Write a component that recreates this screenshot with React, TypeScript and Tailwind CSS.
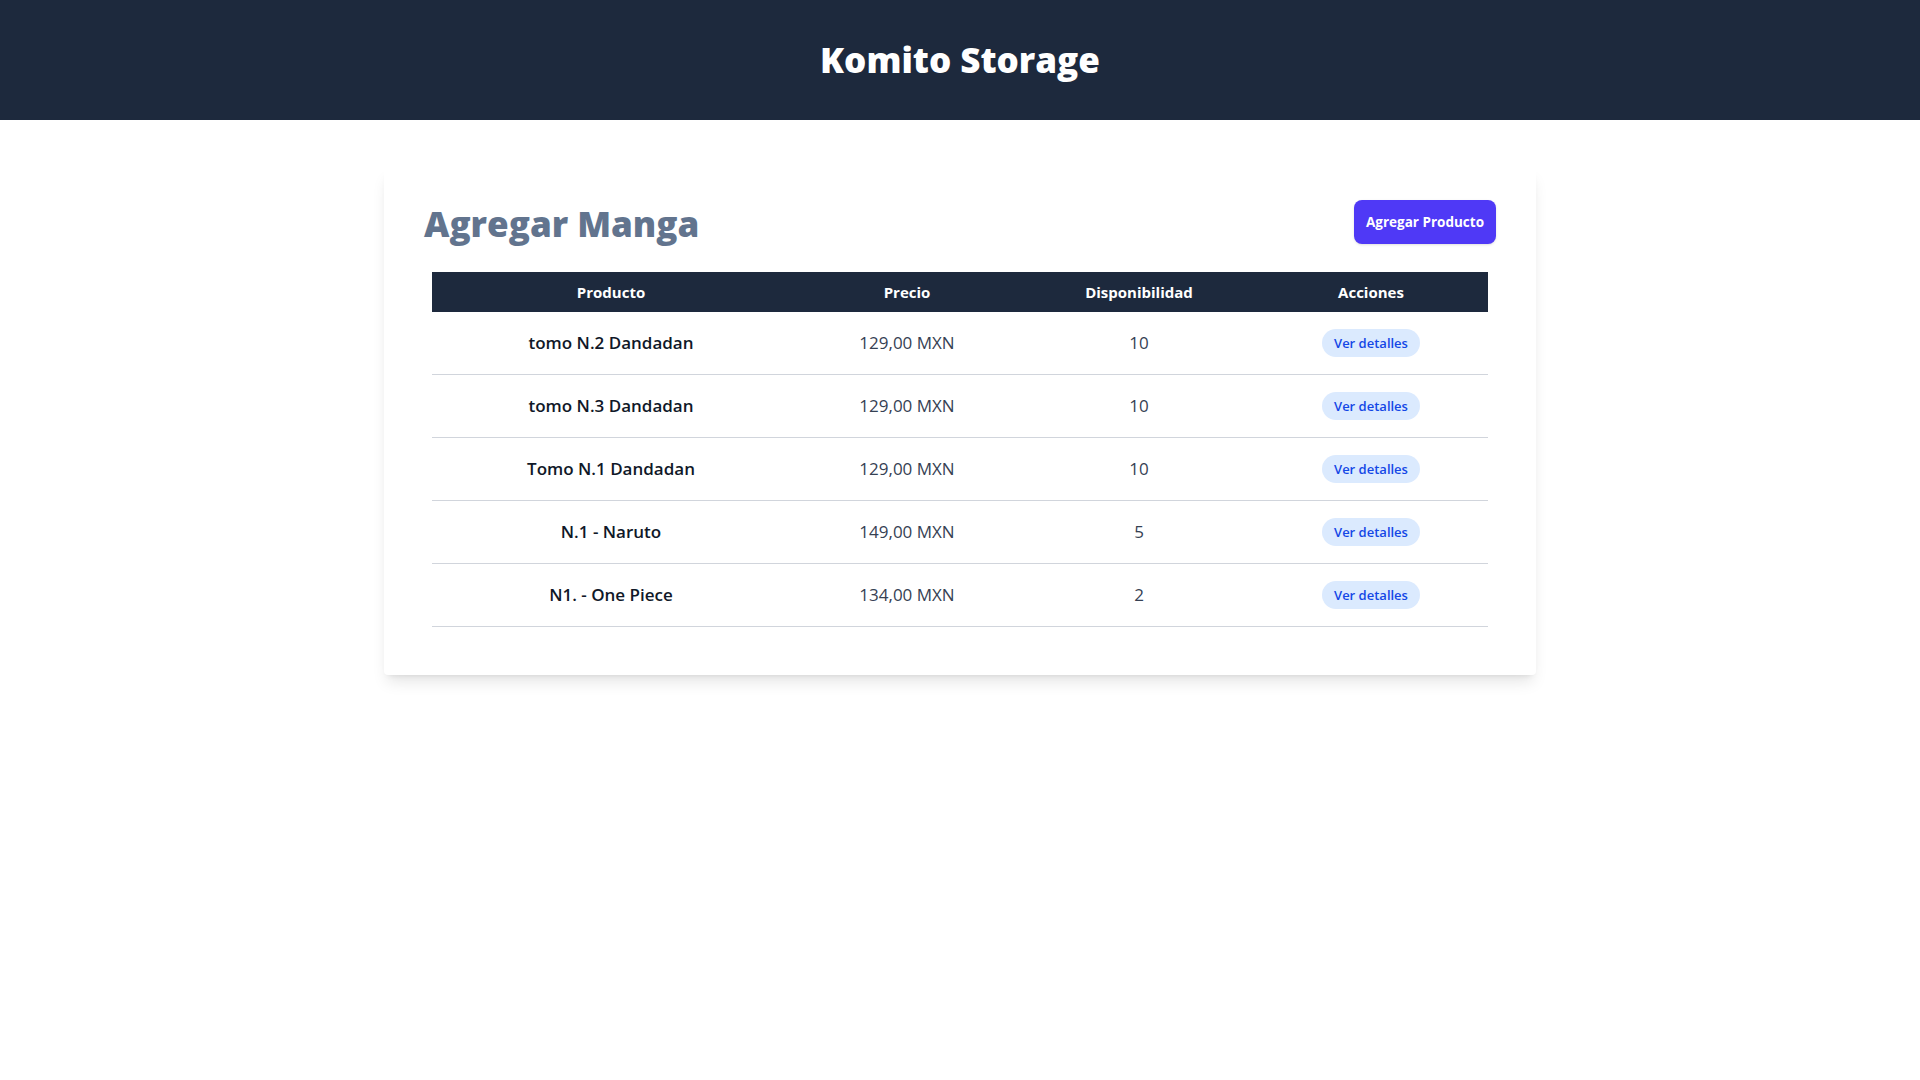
import React from "react";

const productos = [
  { nombre: "tomo N.2 Dandadan", precio: "129,00 MXN", stock: 10 },
  { nombre: "tomo N.3 Dandadan", precio: "129,00 MXN", stock: 10 },
  { nombre: "Tomo N.1 Dandadan", precio: "129,00 MXN", stock: 10 },
  { nombre: "N.1 - Naruto", precio: "149,00 MXN", stock: 5 },
  { nombre: "N1. - One Piece", precio: "134,00 MXN", stock: 2 },
];

export default function App() {
  return (
    <div className="min-h-screen bg-white font-['Open_Sans',sans-serif]">
      <header className="h-[120px] bg-slate-800 flex items-center justify-center">
        <h1 className="text-[35px] leading-10 font-extrabold text-white">Komito Storage</h1>
      </header>

      <main className="mt-12 max-w-6xl mx-auto bg-white shadow-lg rounded-sm px-10 pt-8 pb-12">
        <div className="flex items-center justify-between mb-7">
          <h2 className="text-[35px] leading-10 font-extrabold text-slate-500 mt-1">Agregar Manga</h2>
          <button className="bg-indigo-600 text-white text-[13.5px] leading-5 font-bold px-3 py-3 rounded-lg shadow-sm">
            Agregar Producto
          </button>
        </div>

        <div className="px-2">
          <table className="w-full table-fixed border-collapse">
            <thead>
              <tr className="bg-slate-800 text-white">
                <th className="w-[358px] py-2 font-bold text-[15px] leading-6">Producto</th>
                <th className="w-[234px] py-2 font-bold text-[15px] leading-6">Precio</th>
                <th className="w-[230px] py-2 font-bold text-[15px] leading-6">Disponibilidad</th>
                <th className="w-[234px] py-2 font-bold text-[15px] leading-6">Acciones</th>
              </tr>
            </thead>
            <tbody>
              {productos.map((p, i) => (
                <tr key={i} className={i === 0 ? "border-b border-gray-300 h-[62px]" : "border-b border-gray-300 h-[63px]"}>
                  <td className="text-center text-[17px] font-semibold text-gray-900">{p.nombre}</td>
                  <td className="text-center text-[17px] text-gray-700">{p.precio}</td>
                  <td className="text-center text-[17px] text-gray-700">{p.stock}</td>
                  <td className="text-center">
                    <button className="bg-blue-100 text-blue-700 text-[13px] leading-5 font-semibold px-3 py-1 rounded-full">
                      Ver detalles
                    </button>
                  </td>
                </tr>
              ))}
            </tbody>
          </table>
        </div>
      </main>
    </div>
  );
}
